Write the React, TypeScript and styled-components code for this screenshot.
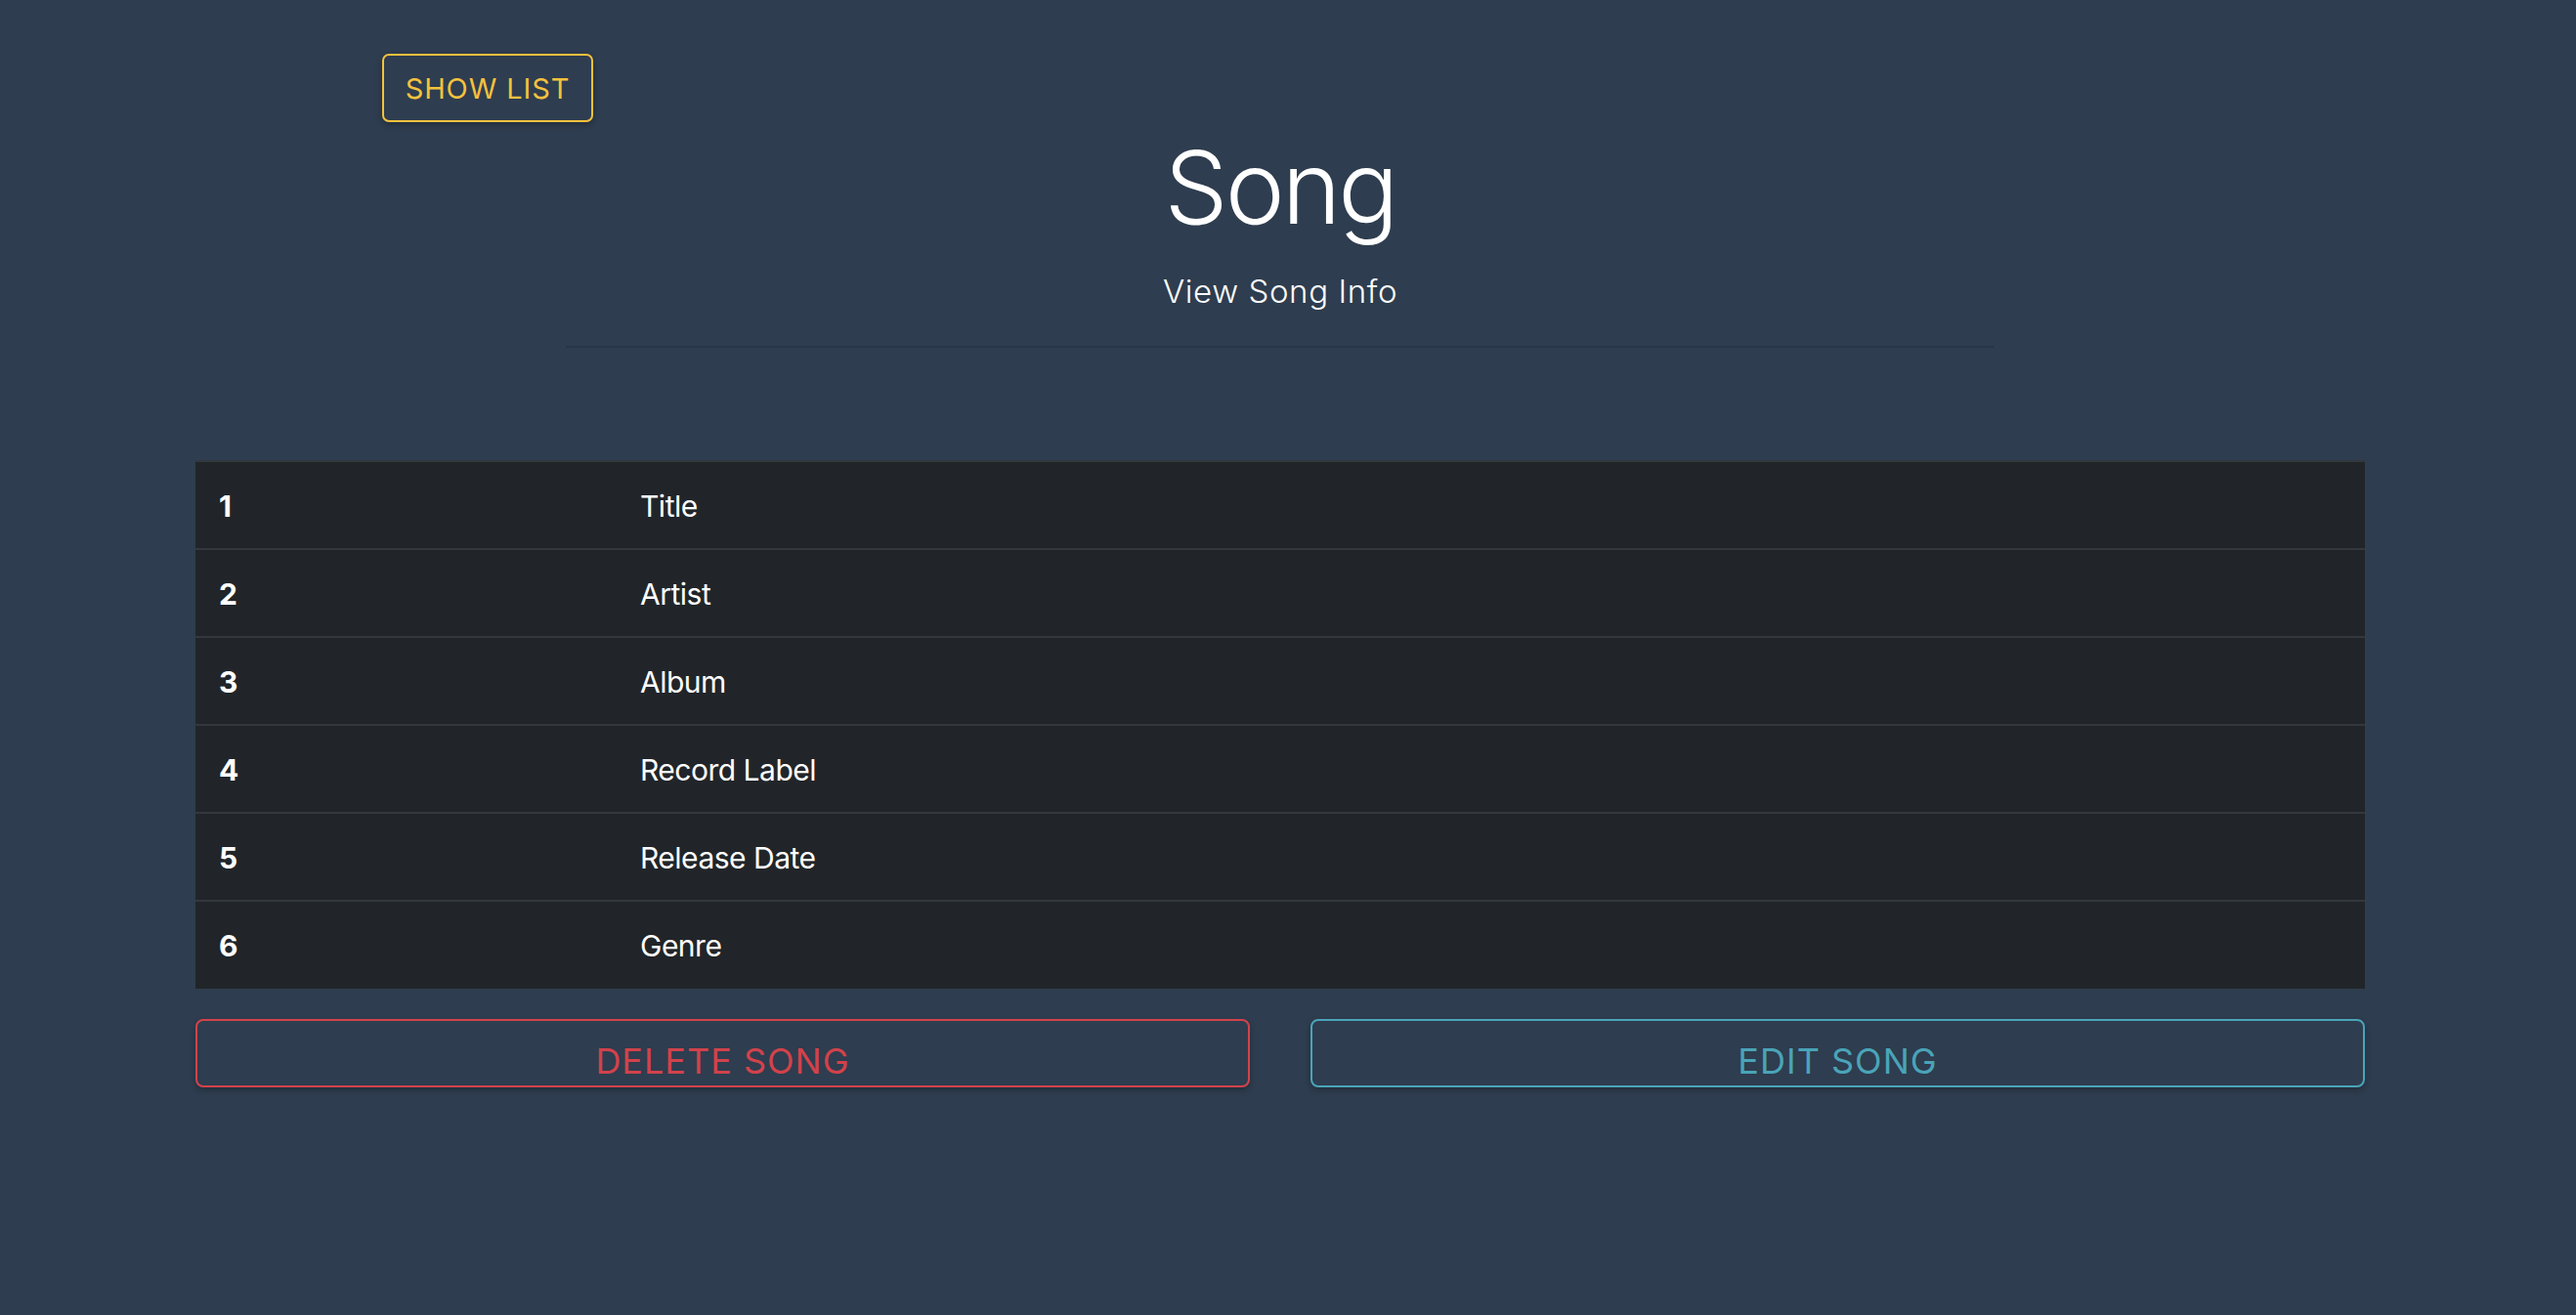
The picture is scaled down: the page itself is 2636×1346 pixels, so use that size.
import styled, { createGlobalStyle } from 'styled-components';

const GlobalStyle = createGlobalStyle`
  html, body {
    margin: 0;
    padding: 0;
    background: #2e3d4f;
  }

  body {
    font-family: Inter, "Noto Sans", "Liberation Sans", sans-serif;
    color: #fff;
  }

  * {
    box-sizing: border-box;
  }
`;

const fields = ['Title', 'Artist', 'Album', 'Record Label', 'Release Date', 'Genre'];

const App = () => {
  return (
    <>
      <GlobalStyle />
      <Page>
        <TopBar>
          <OutlineButton $color="#f5c13e">SHOW LIST</OutlineButton>
        </TopBar>
        <Jumbotron>
          <Title>Song</Title>
          <Lead>View Song Info</Lead>
          <Divider />
        </Jumbotron>
        <Content>
          <InfoTable>
            <tbody>
              {fields.map((field, index) => (
                <tr key={field}>
                  <IndexCell>{index + 1}</IndexCell>
                  <FieldCell>{field}</FieldCell>
                </tr>
              ))}
            </tbody>
          </InfoTable>
          <ActionRow>
            <WideButton $color="#d2424b">DELETE SONG</WideButton>
            <WideButton $color="#4aa4b8">EDIT SONG</WideButton>
          </ActionRow>
        </Content>
      </Page>
    </>
  );
};

export default App;

const Page = styled.div`
  min-height: 100vh;
  padding-right: 16px;
  background: #2e3d4f;
`;

const TopBar = styled.div`
  display: flex;
  padding: 55px 0 0 391px;
`;

const OutlineButton = styled.button<{ $color: string }>`
  display: flex;
  align-items: center;
  justify-content: center;
  width: 216px;
  height: 70px;
  padding: 0;
  border: 2px solid ${({ $color }) => $color};
  border-radius: 7px;
  background: transparent;
  color: ${({ $color }) => $color};
  font-family: Inter, "Liberation Sans", sans-serif;
  font-size: 29px;
  font-weight: 400;
  letter-spacing: 0.9px;
  box-shadow: 0 3px 6px rgba(0, 0, 0, 0.25);
`;

const Jumbotron = styled.header`
  display: flex;
  flex-direction: column;
  align-items: center;
`;

const Title = styled.h1`
  margin: 5px 0 0;
  font-size: 103px;
  font-weight: 300;
  line-height: 1.2;
  letter-spacing: -3px;
`;

const Lead = styled.p`
  margin: 20px 0 0;
  font-size: 33px;
  font-weight: 300;
  line-height: 1.5;
  letter-spacing: 0.6px;
`;

const Divider = styled.hr`
  width: 1462px;
  height: 2px;
  margin: 31px 0 0;
  border: 0;
  background: rgba(0, 0, 0, 0.1);
`;

const Content = styled.main`
  padding: 115px 200px 0;
`;

const InfoTable = styled.table`
  width: 100%;
  border-collapse: collapse;
  background: #212529;

  tr {
    height: 90px;
    border-top: 2px solid #32383e;
  }
`;

const IndexCell = styled.td`
  width: 431px;
  padding: 2px 24px 0;
  font-size: 30px;
  font-weight: 700;
  line-height: 1.5;
`;

const FieldCell = styled.td`
  padding: 2px 24px 0;
  font-size: 30px;
  font-weight: 400;
  line-height: 1.5;
  letter-spacing: -0.5px;
`;

const ActionRow = styled.div`
  display: grid;
  grid-template-columns: 1fr 1fr;
  gap: 62px;
  margin-top: 31px;
`;

const WideButton = styled.button<{ $color: string }>`
  display: flex;
  align-items: center;
  justify-content: center;
  height: 70px;
  padding: 17px 0 0;
  border: 2px solid ${({ $color }) => $color};
  border-radius: 8px;
  background: transparent;
  color: ${({ $color }) => $color};
  font-family: Inter, "Liberation Sans", sans-serif;
  font-size: 36px;
  font-weight: 400;
  line-height: 1.2;
  letter-spacing: 1px;
  box-shadow: 0 3px 6px rgba(0, 0, 0, 0.25);
`;
